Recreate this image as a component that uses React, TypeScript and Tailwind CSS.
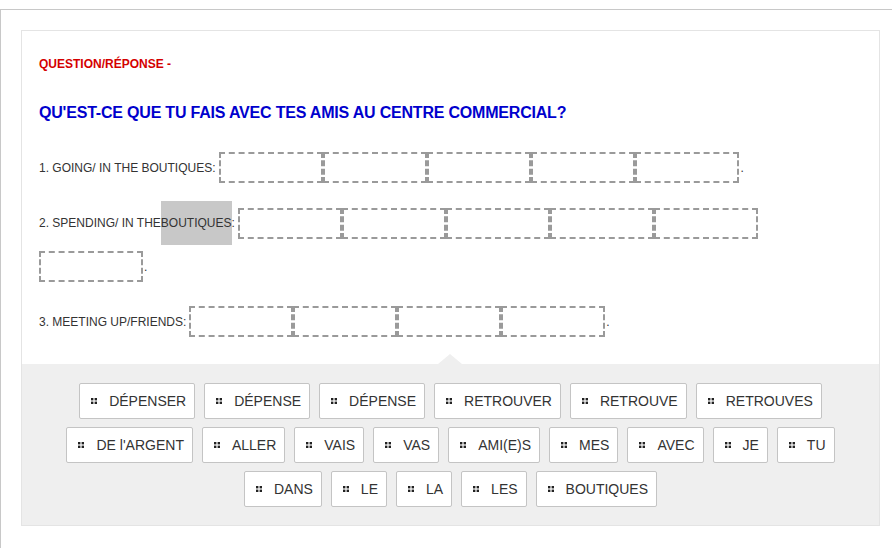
import React from "react";

const words = [
  ["DÉPENSER", "DÉPENSE", "DÉPENSE", "RETROUVER", "RETROUVE", "RETROUVES"],
  ["DE l'ARGENT", "ALLER", "VAIS", "VAS", "AMI(E)S", "MES", "AVEC", "JE", "TU"],
  ["DANS", "LE", "LA", "LES", "BOUTIQUES"],
];

function Blank() {
  return <span className="inline-block w-[104px] h-[31px] border-2 border-dashed border-[#9a9a9a] shrink-0" />;
}

function Blanks({ n }: { n: number }) {
  return (
    <>
      {Array.from({ length: n }).map((_, i) => (
        <Blank key={i} />
      ))}
      <span className="ml-[1px]">.</span>
    </>
  );
}

function Grip() {
  return (
    <svg width="6" height="6" viewBox="0 0 5 5" className="shrink-0">
      <rect x="0" y="0" width="2" height="2" fill="#222" />
      <rect x="3" y="0" width="2" height="2" fill="#222" />
      <rect x="0" y="3" width="2" height="2" fill="#222" />
      <rect x="3" y="3" width="2" height="2" fill="#222" />
    </svg>
  );
}

export default function App() {
  return (
    <div className="min-h-[548px] bg-white font-['Liberation_Sans',Arial,sans-serif] text-[#333]">
      <div className="h-[9px]" />
      <div className="border-t border-l border-[#c8c8c8] pl-[20px] pr-[12px] pt-[20px] min-h-[539px]">
        <div className="border border-[#e4e4e4] bg-white">
          <div className="pl-[17px] pr-[18px] pt-[23px]">
            <div className="text-[12px] leading-[20px] font-bold text-[#d40000]">QUESTION/RÉPONSE -</div>
            <div className="mt-[27px] text-[16px] leading-[24px] font-bold text-[#0000cd] tracking-[-0.2px]">
              QU'EST-CE QUE TU FAIS AVEC TES AMIS AU CENTRE COMMERCIAL?
            </div>

            <div className="mt-[27px] flex items-center text-[12px]">
              <span className="mr-[4px]">1. GOING/ IN THE BOUTIQUES:</span>
              <Blanks n={5} />
            </div>

            <div className="mt-[18px] flex items-center text-[12px] h-[44px]">
              <span>2. SPENDING/ IN THE</span>
              <span className="h-[44px] flex items-center bg-[#c8c8c8]">BOUTIQUES</span>
              <span className="mr-[3px]">:</span>
              {Array.from({ length: 5 }).map((_, i) => (
                <Blank key={i} />
              ))}
            </div>
            <div className="mt-[6px] flex items-center text-[12px]">
              <Blanks n={1} />
            </div>

            <div className="mt-[24px] flex items-center text-[12px]">
              <span className="mr-[3px]">3. MEETING UP/FRIENDS:</span>
              <Blanks n={4} />
            </div>
          </div>

          <div className="mt-[17px] flex justify-center">
            <div className="ml-[-2px] w-0 h-0 border-l-[12px] border-l-transparent border-r-[12px] border-r-transparent border-b-[10px] border-b-[#efefef]" />
          </div>
          <div className="bg-[#efefef] pt-[19px] pb-[18px] flex flex-col items-center gap-y-[8px]">
            {words.map((row, r) => (
              <div key={r} className="flex justify-center gap-x-[9px]">
                {row.map((w, i) => (
                  <div
                    key={i}
                    className="h-[36px] flex items-center bg-white border border-[#c4c4c4] rounded-[2px] pl-[11px] pr-[8px] text-[14px] text-[#333]"
                  >
                    <Grip />
                    <span className="ml-[12px]">{w}</span>
                  </div>
                ))}
              </div>
            ))}
          </div>
        </div>
      </div>
    </div>
  );
}
